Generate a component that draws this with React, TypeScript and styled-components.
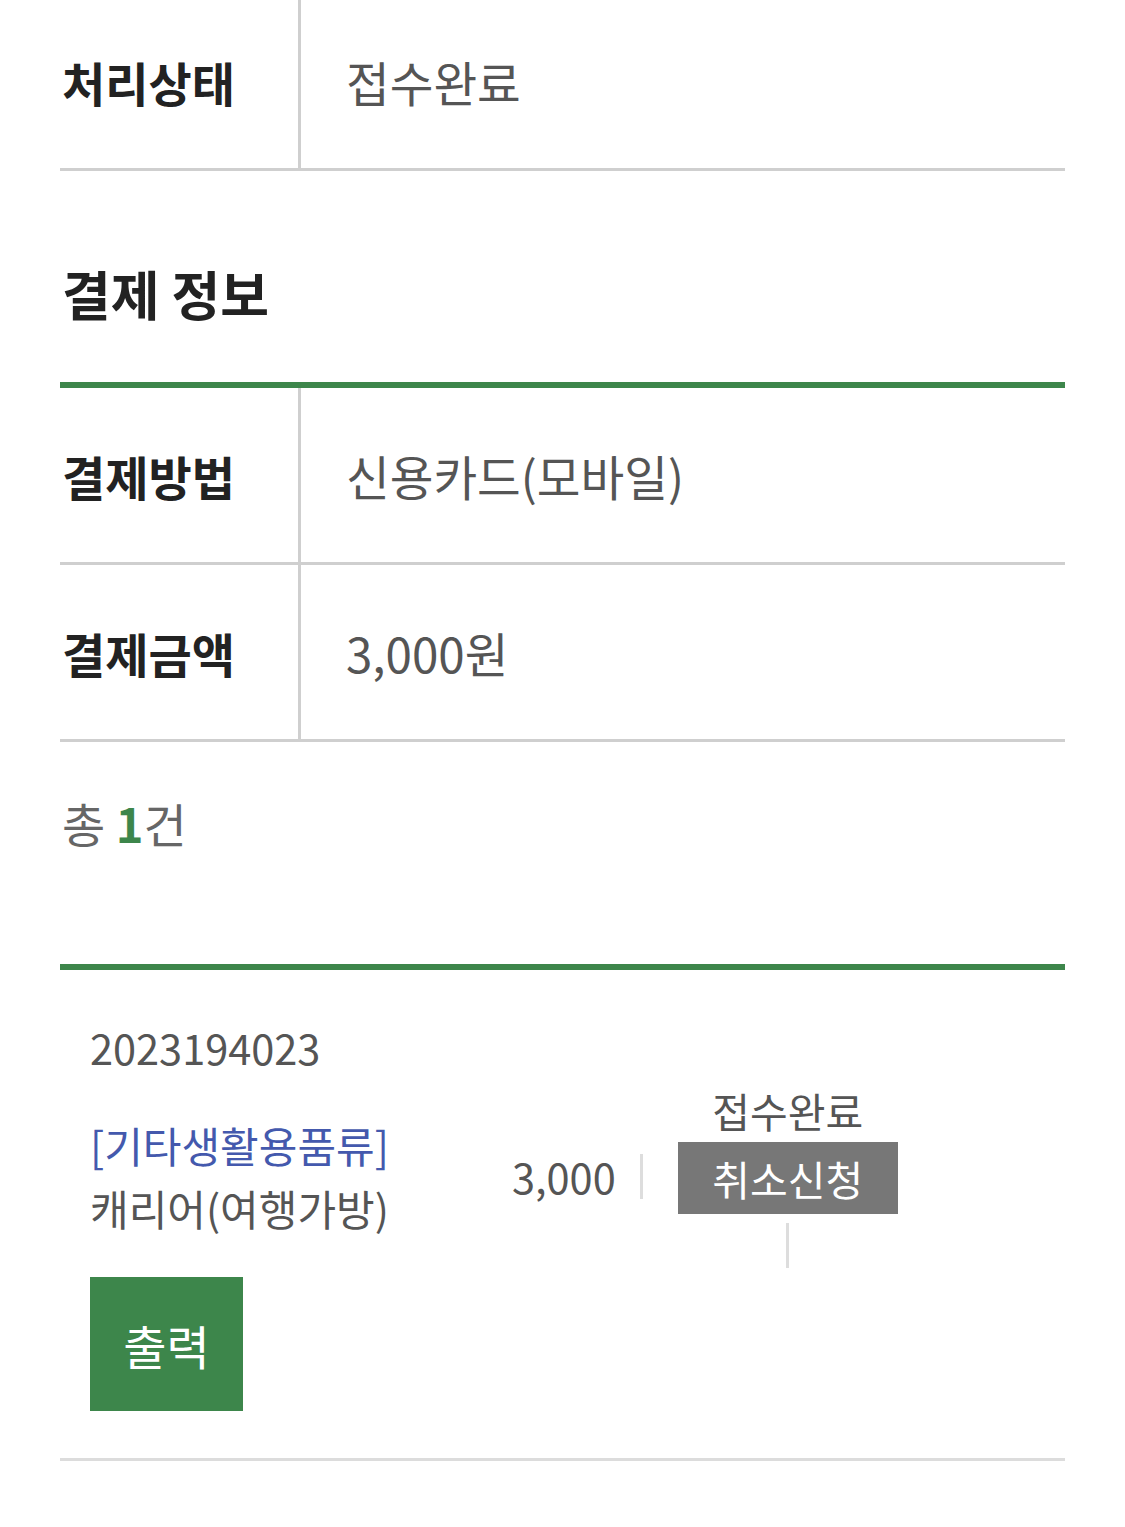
import React from "react";
import styled, { createGlobalStyle } from "styled-components";

const GlobalStyle = createGlobalStyle`
  html, body { margin: 0; padding: 0; background: #fff; }
  body { font-family: "Noto Sans CJK KR", "Noto Sans", sans-serif; }
  * { box-sizing: border-box; }
`;

const GREEN = "#3d864b";
const LINE = "#cfcfcf";

const Page = styled.div`
  padding: 0 60px;
  width: 1125px;
  padding-bottom: 60px;
  overflow: hidden;
`;

const Table = styled.div<{ $top?: boolean; $cut?: boolean }>`
  border-top: ${(p) => (p.$top ? `6px solid ${GREEN}` : "none")};
  margin-top: ${(p) => (p.$cut ? "-6px" : "0")};
`;

const Row = styled.div`
  display: grid;
  grid-template-columns: 238px 3px 1fr;
  height: 177px;
  border-bottom: 3px solid ${LINE};
`;

const Label = styled.div`
  display: flex;
  align-items: center;
  padding-left: 2px;
  font-size: 47px;
  font-weight: 700;
  color: #222;
`;

const Divider = styled.div`
  background: ${LINE};
`;

const Value = styled.div`
  display: flex;
  align-items: center;
  padding-left: 45px;
  font-size: 47.5px;
  font-weight: 400;
  color: #555;
`;

const SectionTitle = styled.h2`
  margin: 87px 0 54px;
  padding-left: 2px;
  font-size: 53px;
  line-height: 70px;
  font-weight: 700;
  color: #222;
`;

const Total = styled.div`
  margin-top: 51px;
  padding-left: 2px;
  font-size: 47px;
  line-height: 60px;
  color: #666;
  b {
    color: ${GREEN};
    font-weight: 700;
  }
`;

const List = styled.div`
  margin-top: 111px;
  border-top: 6px solid ${GREEN};
`;

const Item = styled.div`
  padding: 49px 30px 47px;
  border-bottom: 3px solid #dcdcdc;
`;

const OrderNo = styled.div`
  font-size: 41.5px;
  line-height: 56px;
  color: #555;
`;

const InfoRow = styled.div`
  display: flex;
  align-items: center;
  margin-top: 9px;
`;

const NameCol = styled.div`
  flex: 0 0 422px;
  font-size: 42px;
  line-height: 63px;
  color: #555;
`;

const Category = styled.div`
  color: #4459ad;
`;

const Price = styled.div`
  font-size: 41.5px;
  line-height: 45px;
  color: #555;
  padding-right: 24px;
  border-right: 3px solid #ddd;
  margin-right: 35px;
`;

const StatusCol = styled.div`
  width: 220px;
  display: flex;
  flex-direction: column;
  align-items: center;
`;

const StatusText = styled.div`
  font-size: 41px;
  line-height: 52px;
  color: #555;
`;

const CancelButton = styled.button`
  margin-top: 6px;
  width: 220px;
  height: 72px;
  border: none;
  background: #777;
  color: #fff;
  font-family: inherit;
  font-size: 41px;
  padding: 0;
`;

const StubLine = styled.div`
  margin-top: 9px;
  width: 3px;
  height: 45px;
  background: #ddd;
`;

const PrintButton = styled.button`
  margin-top: 9px;
  width: 153px;
  height: 134px;
  border: none;
  background: ${GREEN};
  color: #fff;
  font-family: inherit;
  font-size: 47px;
  padding: 0;
  display: block;
`;

const infoRows = [
  { label: "결제방법", value: "신용카드(모바일)" },
  { label: "결제금액", value: "3,000원" },
];

export default function App() {
  return (
    <>
      <GlobalStyle />
      <Page>
        <Table $cut>
          <Row>
            <Label>처리상태</Label>
            <Divider />
            <Value>접수완료</Value>
          </Row>
        </Table>

        <SectionTitle>결제 정보</SectionTitle>

        <Table $top>
          {infoRows.map((r) => (
            <Row key={r.label}>
              <Label>{r.label}</Label>
              <Divider />
              <Value>{r.value}</Value>
            </Row>
          ))}
        </Table>

        <Total>
          총 <b>1</b>건
        </Total>

        <List>
          <Item>
            <OrderNo>2023194023</OrderNo>
            <InfoRow>
              <NameCol>
                <Category>[기타생활용품류]</Category>
                <div>캐리어(여행가방)</div>
              </NameCol>
              <Price>3,000</Price>
              <StatusCol>
                <StatusText>접수완료</StatusText>
                <CancelButton>취소신청</CancelButton>
                <StubLine />
              </StatusCol>
            </InfoRow>
            <PrintButton>출력</PrintButton>
          </Item>
        </List>
      </Page>
    </>
  );
}
